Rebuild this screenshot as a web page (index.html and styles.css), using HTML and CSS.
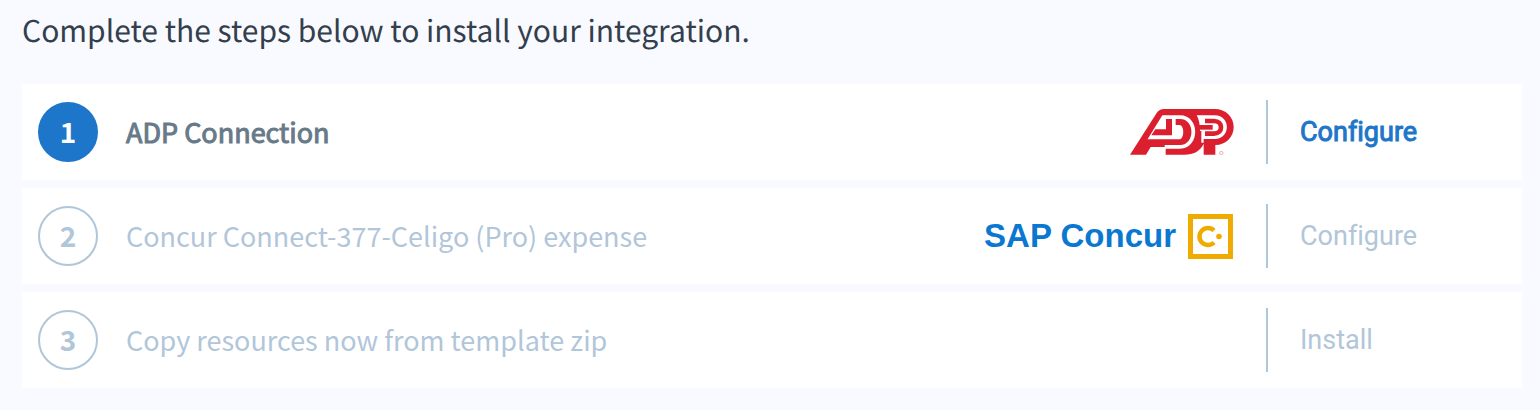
FILE: index.html
```html
<!DOCTYPE html>
<html lang="en">
<head>
<meta charset="utf-8">
<meta name="viewport" content="width=device-width, initial-scale=1">
<title>Install integration</title>
<link rel="stylesheet" href="styles.css">
</head>
<body>
<main class="page">
  <h1 class="intro">Complete the steps below to install your integration.</h1>
  <ol class="steps">
    <li class="step step-current">
      <span class="step-number">1</span>
      <span class="step-name">ADP Connection</span>
      <svg class="logo-adp" viewBox="0 0 312 138" role="img" aria-label="ADP">
        <path fill="#dc1f2e" d="M0 137 L80 12 Q88 0 102 0 H254 C288 0 311 24 311 54 C311 84 288 108 256 108 V137 H221 V104 C210 127 190 137 164 137 H107 V114 H62 L48 137 Z"/>
        <path fill="#fff" d="M49 97 L97 19 H150 C211 19 211 119 150 119 H104 V97 Z"/>
        <path fill="#dc1f2e" d="M44 91 H148 C164 91 164 48 148 48 H137 V30 H150 C196 30 196 108 150 108 H44 Z M76 61 H108 V30 H126 V79 H64 Z"/>
        <path fill="#fff" d="M200 19 H254 C303 19 303 90 254 90 H221 V101 H214 V66 H210 C210 48 207 30 200 19 Z"/>
        <path fill="none" stroke="#dc1f2e" stroke-width="14" d="M225 36 H252 C280 36 280 74 252 74 H225"/>
        <path fill="#dc1f2e" d="M206 48 H248 V62 H206 Z"/>
        <circle cx="274" cy="132" r="5" fill="none" stroke="#f3a6ad" stroke-width="3"/>
      </svg>
      <button class="action" type="button">Configure</button>
    </li>
    <li class="step">
      <span class="step-number">2</span>
      <span class="step-name">Concur Connect-377-Celigo (Pro) expense</span>
      <span class="logo-concur">
        <span>SAP Concur</span>
        <svg class="concur-mark" viewBox="0 0 46 46" aria-hidden="true">
          <rect x="2.5" y="3.5" width="40" height="40" fill="none" stroke="#f0ab00" stroke-width="5"/>
          <path d="M26 17.5 A8.5 8.5 0 1 0 26 29.5" fill="none" stroke="#f0ab00" stroke-width="4.5"/>
          <circle cx="31" cy="23.5" r="2.8" fill="#f0ab00"/>
        </svg>
      </span>
      <button class="action" type="button" disabled>Configure</button>
    </li>
    <li class="step">
      <span class="step-number">3</span>
      <span class="step-name">Copy resources now from template zip</span>
      <button class="action" type="button" disabled>Install</button>
    </li>
  </ol>
</main>
</body>
</html>
```
FILE: styles.css
```css
* { box-sizing: border-box; }

body {
  margin: 0;
  background: #f9faff;
  color: #333f4d;
  font-family: "Noto Sans CJK SC", "Noto Sans", sans-serif;
}

.page { padding: 5px 18px 22px 22px; }

.intro {
  margin: 0 0 31px;
  font-size: 30px;
  line-height: 48px;
  font-weight: 400;
  text-rendering: geometricPrecision;
}

.steps {
  display: flex;
  flex-direction: column;
  gap: 8px;
  margin: 0;
  padding: 0;
  list-style: none;
}

.step {
  display: flex;
  align-items: center;
  padding: 16px;
  background: #fff;
  color: #b1c6d9;
}

.step-number {
  display: flex;
  align-items: center;
  justify-content: center;
  width: 60px;
  height: 60px;
  padding-bottom: 2px;
  border: 2px solid #b1c6d9;
  border-radius: 50%;
  font-size: 28px;
  line-height: 32px;
  font-weight: 700;
}

.step-name {
  flex: 1;
  padding-left: 28px;
  font-size: 27px;
  line-height: 40px;
}

.step-current .step-number {
  background: #1d76c9;
  border-color: #1d76c9;
  color: #fff;
}

.step-current .step-name {
  color: #677a89;
  -webkit-text-stroke: 1px currentcolor;
}

.logo-adp {
  width: 104px;
  height: 46px;
}

.logo-concur {
  display: flex;
  align-items: center;
  gap: 12px;
  color: #0a78d1;
  font: 700 33px/40px "Liberation Sans", Arial, sans-serif;
}

.concur-mark {
  width: 46px;
  height: 46px;
}

.action {
  width: 240px;
  height: 64px;
  margin-left: 32px;
  padding: 0 0 0 32px;
  border: 0;
  border-left: 2px solid #b1c6d9;
  background: none;
  color: #b1c6d9;
  font: 400 27px/32px Roboto, sans-serif;
  font-variant-ligatures: none;
  text-align: left;
}

.step-current .action {
  color: #1d76c9;
  -webkit-text-stroke: 1px currentcolor;
  cursor: pointer;
}
```
